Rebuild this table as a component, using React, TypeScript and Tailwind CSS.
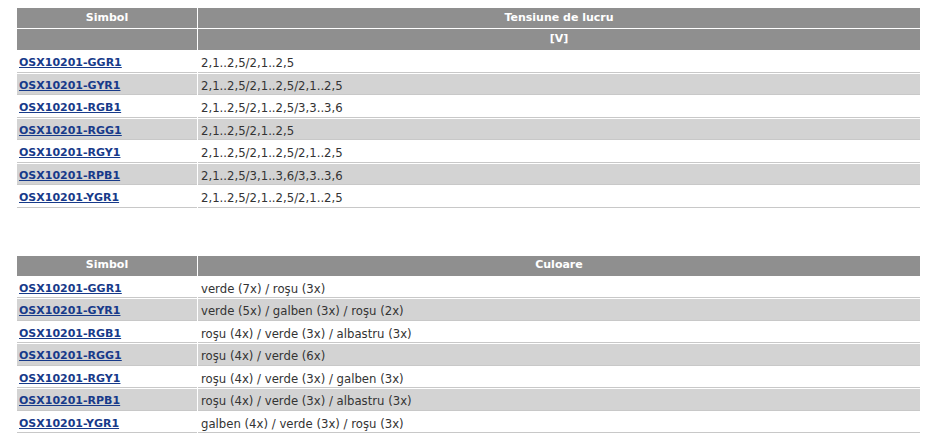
import React from "react";

const t1 = [
  ["OSX10201-GGR1", "2,1..2,5/2,1..2,5"],
  ["OSX10201-GYR1", "2,1..2,5/2,1..2,5/2,1..2,5"],
  ["OSX10201-RGB1", "2,1..2,5/2,1..2,5/3,3..3,6"],
  ["OSX10201-RGG1", "2,1..2,5/2,1..2,5"],
  ["OSX10201-RGY1", "2,1..2,5/2,1..2,5/2,1..2,5"],
  ["OSX10201-RPB1", "2,1..2,5/3,1..3,6/3,3..3,6"],
  ["OSX10201-YGR1", "2,1..2,5/2,1..2,5/2,1..2,5"],
];

const t2 = [
  ["OSX10201-GGR1", "verde (7x) / roşu (3x)"],
  ["OSX10201-GYR1", "verde (5x) / galben (3x) / roşu (2x)"],
  ["OSX10201-RGB1", "roşu (4x) / verde (3x) / albastru (3x)"],
  ["OSX10201-RGG1", "roşu (4x) / verde (6x)"],
  ["OSX10201-RGY1", "roşu (4x) / verde (3x) / galben (3x)"],
  ["OSX10201-RPB1", "roşu (4x) / verde (3x) / albastru (3x)"],
  ["OSX10201-YGR1", "galben (4x) / verde (3x) / roşu (3x)"],
];

function Rows({ rows }: { rows: string[][] }) {
  return (
    <>
      {rows.map((r, i) => {
        const bg = i % 2 === 1 ? "bg-[#d3d3d3]" : "bg-white";
        return (
          <tr key={i}>
            <td className={`${bg} h-[21.5px] border-b border-[#c8c8c8] p-0 pl-[2px] pt-[4px] align-top leading-[16px]`}>
              <a href="#" className="font-bold text-[#173a8a] underline">{r[0]}</a>
            </td>
            <td className={`${bg} h-[21.5px] border-b border-[#c8c8c8] p-0 pl-[3px] pt-[4px] align-top leading-[16px] text-[11.7px] text-[#333333]`}>
              {r[1]}
            </td>
          </tr>
        );
      })}
    </>
  );
}

export default function App() {
  return (
    <div
      className="bg-white w-[931px] h-[443px] pt-[7px] text-[11px]"
      style={{ fontFamily: '"DejaVu Sans", Verdana, sans-serif' }}
    >
      <table className="ml-[16px] w-[905px] border-separate border-spacing-[1px] table-fixed">
        <colgroup>
          <col className="w-[180px]" />
          <col />
        </colgroup>
        <tbody>
          <tr>
            <th className="bg-[#8f8f8f] text-white font-bold h-[20px] p-0 text-center">Simbol</th>
            <th className="bg-[#8f8f8f] text-white font-bold h-[20px] p-0 text-center">Tensiune de lucru</th>
          </tr>
          <tr>
            <th className="bg-[#8f8f8f] text-white font-bold h-[21px] p-0"></th>
            <th className="bg-[#8f8f8f] text-white font-bold h-[21px] p-0 text-center">[V]</th>
          </tr>
          <Rows rows={t1} />
        </tbody>
      </table>
      <table className="ml-[16px] mt-[46px] w-[905px] border-separate border-spacing-[1px] table-fixed">
        <colgroup>
          <col className="w-[180px]" />
          <col />
        </colgroup>
        <tbody>
          <tr>
            <th className="bg-[#8f8f8f] text-white font-bold h-[20px] p-0 text-center">Simbol</th>
            <th className="bg-[#8f8f8f] text-white font-bold h-[20px] p-0 text-center">Culoare</th>
          </tr>
          <Rows rows={t2} />
        </tbody>
      </table>
    </div>
  );
}
